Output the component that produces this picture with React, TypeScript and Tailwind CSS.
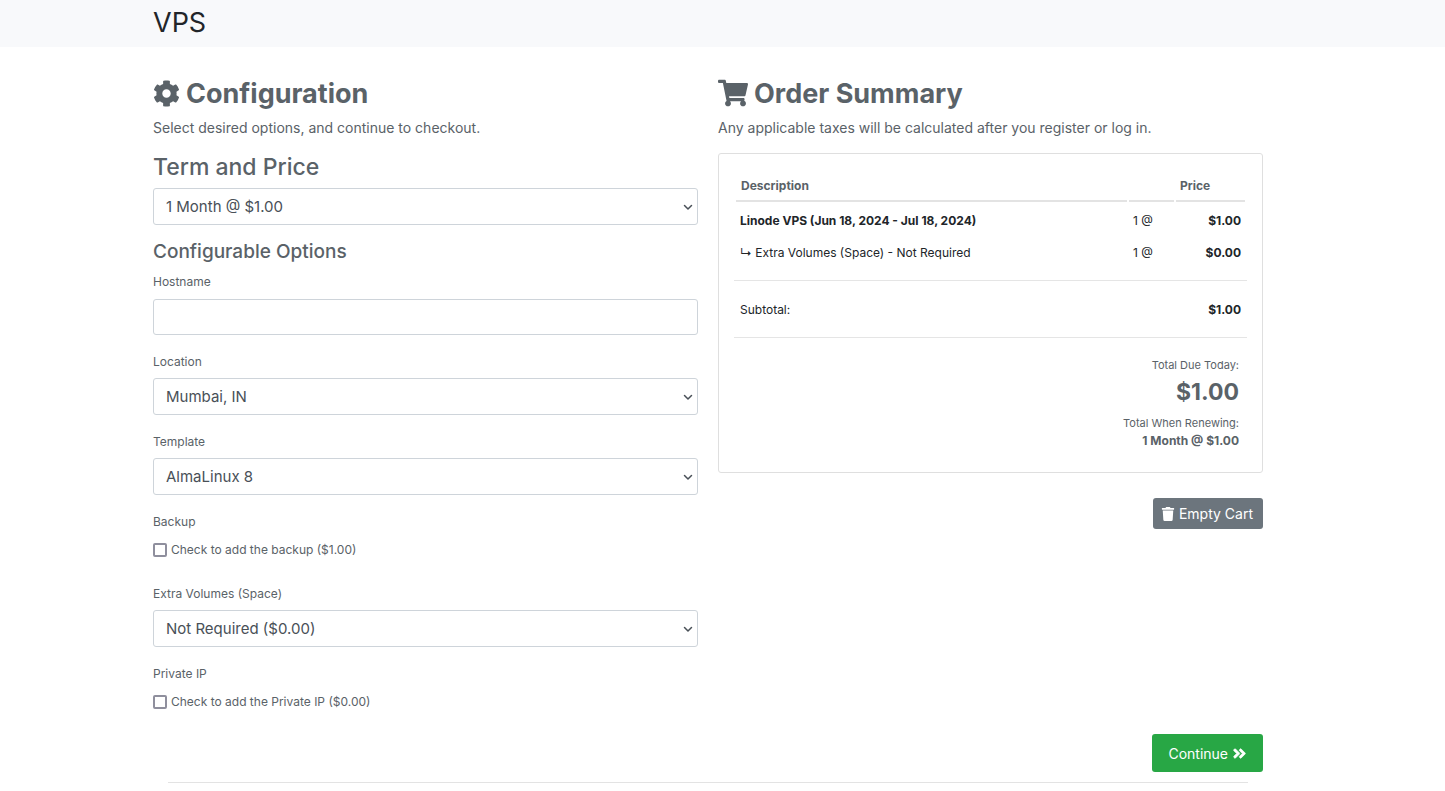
import type { ReactNode } from "react";
import { FaAngleDoubleRight, FaCog, FaShoppingCart, FaTrash } from "react-icons/fa";

const fieldClass =
  "block w-full appearance-none rounded-[3px] border border-[#ced4da] bg-white px-3 text-[15px] leading-6 text-[#495057]";

function Container({ children }: { children: ReactNode }) {
  return (
    <div className="pr-[29px]">
      <div className="mx-auto max-w-[1140px] px-[15px]">{children}</div>
    </div>
  );
}

function Select({ id, value }: { id: string; value: string }) {
  return (
    <div className="relative">
      <select id={id} className={`h-[37px] pt-px ${fieldClass}`}>
        <option>{value}</option>
      </select>
      <span className="pointer-events-none absolute inset-y-0 right-[5px] flex items-center text-[#495057]">
        <svg width="10" height="8" viewBox="0 0 10 8" fill="none" stroke="currentColor" strokeWidth="1.5" strokeLinecap="round" strokeLinejoin="round" aria-hidden="true">
          <path d="M1.5 2.5 5 6l3.5-3.5" />
        </svg>
      </span>
    </div>
  );
}

function SelectField({ id, label, value }: { id: string; label: string; value: string }) {
  return (
    <div className="mb-[18px]">
      <label htmlFor={id} className="mb-[7px] block text-[12px] leading-[18px]">
        {label}
      </label>
      <Select id={id} value={value} />
    </div>
  );
}

function CheckField({ id, title, label }: { id: string; title: string; label: string }) {
  return (
    <fieldset className="mb-[26px] last:mb-0">
      <legend className="mb-[10px] block text-[12px] leading-[18px]">{title}</legend>
      <div className="flex items-center gap-1">
        <input
          id={id}
          type="checkbox"
          className="size-[14px] shrink-0 appearance-none rounded-[2px] border-2 border-[#8f8f9d] bg-white checked:bg-[#8f8f9d]"
        />
        <label htmlFor={id} className="text-[12px] leading-[18px]">
          {label}
        </label>
      </div>
    </fieldset>
  );
}

const items = [
  { name: "Linode VPS (Jun 18, 2024 - Jul 18, 2024)", price: "$1.00", bold: true },
  { name: "Extra Volumes (Space) - Not Required", price: "$0.00", bold: false },
];

function Configuration() {
  return (
    <section>
      <h2 className="flex items-center gap-[6px] text-[27px] leading-[34px] font-bold">
        <FaCog className="mb-[2px] size-[27px]" />
        Configuration
      </h2>
      <p className="mt-[7px] text-[14px] leading-5">Select desired options, and continue to checkout.</p>
      <h3 className="mt-[14px] mb-[6px]">
        <label htmlFor="term" className="block text-[23px] leading-[30px] font-medium">
          Term and Price
        </label>
      </h3>
      <Select id="term" value="1 Month @ $1.00" />
      <h4 className="mt-[15px] text-[19px] leading-6 font-medium">Configurable Options</h4>
      <div className="mt-[9px]">
        <div className="mb-[18px]">
          <label htmlFor="hostname" className="mb-2 block text-[12px] leading-[18px]">
            Hostname
          </label>
          <input id="hostname" type="text" className={`h-9 ${fieldClass}`} />
        </div>
        <SelectField id="location" label="Location" value="Mumbai, IN" />
        <SelectField id="template" label="Template" value="AlmaLinux 8" />
        <CheckField id="backup" title="Backup" label="Check to add the backup ($1.00)" />
        <SelectField id="volumes" label="Extra Volumes (Space)" value="Not Required ($0.00)" />
        <CheckField id="private-ip" title="Private IP" label="Check to add the Private IP ($0.00)" />
      </div>
    </section>
  );
}

function OrderSummary() {
  return (
    <section>
      <h2 className="flex items-center gap-[6px] text-[27px] leading-[34px] font-bold">
        <FaShoppingCart className="mb-[2px] h-7 w-[30px]" />
        Order Summary
      </h2>
      <p className="mt-[7px] text-[14px] leading-5">
        Any applicable taxes will be calculated after you register or log in.
      </p>
      <div className="mt-[15px] rounded-[3px] border border-[#dfdfdf] p-[15px] text-[12px] leading-[18px]">
        <table className="w-full border-separate border-spacing-x-[2px] border-spacing-y-0 text-[#212529]">
          <thead className="text-[#5a6268]">
            <tr>
              <th className="h-[33px] border-b-2 border-[#e3e3e3] px-[5px] pt-[3px] text-left font-bold">Description</th>
              <th className="w-[45px] border-b-2 border-[#e3e3e3]" aria-label="Quantity" />
              <th className="w-[69px] border-b-2 border-[#e3e3e3] px-1 pt-[3px] text-left font-bold">Price</th>
            </tr>
          </thead>
          <tbody>
            {items.map((item) => (
              <tr key={item.name}>
                <td className={item.bold ? "h-8 px-1 pt-[6px] font-bold" : "h-8 px-1 pt-[6px]"}>
                  {item.bold ? item.name : `↳ ${item.name}`}
                </td>
                <td className="px-1 pt-[6px]">1 @</td>
                <td className="px-1 pt-[6px] text-right font-bold">{item.price}</td>
              </tr>
            ))}
          </tbody>
        </table>
        <dl className="mt-[14px] flex h-[58px] items-center justify-between border-y border-[#e5e5e5] px-[6px] pt-px text-[#212529]">
          <dt>Subtotal:</dt>
          <dd className="font-bold">$1.00</dd>
        </dl>
        <dl className="mt-[18px] mb-[7px] pr-2 text-right">
          <dt className="text-[11px] leading-[18px]">Total Due Today:</dt>
          <dd className="mb-1 text-[23px] leading-9 font-bold">$1.00</dd>
          <dt className="text-[11px] leading-[18px]">Total When Renewing:</dt>
          <dd className="font-bold">1 Month @ $1.00</dd>
        </dl>
      </div>
      <div className="mt-[25px] flex justify-end">
        <button
          type="button"
          className="flex h-[31px] items-center gap-1 rounded-[3px] bg-[#6c757d] pr-[10px] pl-2 text-[14px] text-white"
        >
          <FaTrash className="size-[14px]" />
          Empty Cart
        </button>
      </div>
    </section>
  );
}

export default function App() {
  return (
    <div className="bg-white font-['Inter',sans-serif] text-[#5a6268]">
      <header className="bg-[#f8f9fb] pt-[6px] pb-[7px] text-[#212529]">
        <Container>
          <h1 className="text-[27px] leading-[34px]">VPS</h1>
        </Container>
      </header>
      <main className="pt-[30px]">
        <Container>
          <form onSubmit={(e) => e.preventDefault()}>
            <div className="grid grid-cols-2 gap-5">
              <Configuration />
              <OrderSummary />
            </div>
            <div className="mt-[23px] flex justify-end">
              <button
                type="submit"
                className="flex h-[38px] items-center gap-1 rounded-[3px] bg-[#28a745] px-4 text-[14px] text-white"
              >
                Continue
                <FaAngleDoubleRight className="size-[15px] stroke-current stroke-[24]" />
              </button>
            </div>
          </form>
          <hr className="mx-[15px] mt-[10px] border-[#e3e3e3]" />
        </Container>
      </main>
    </div>
  );
}
